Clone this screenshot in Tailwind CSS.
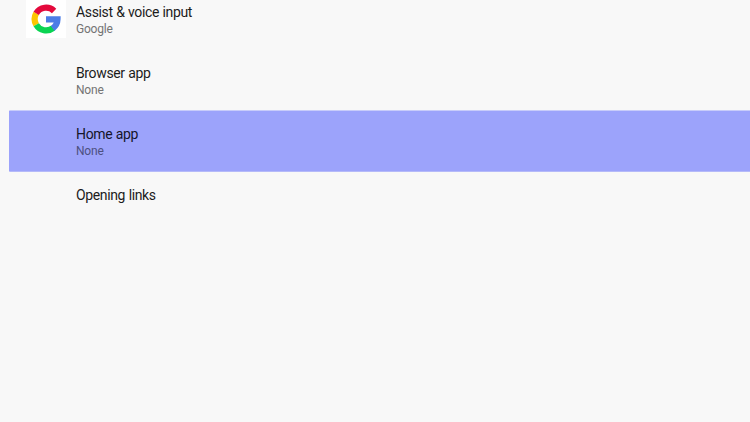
<!DOCTYPE html>
<html lang="en">
  <head>
    <meta charset="UTF-8" />
    <meta name="viewport" content="width=device-width, initial-scale=1.0" />
    <title>Default apps</title>
    <script src="https://cdn.jsdelivr.net/npm/@tailwindcss/browser@4"></script>
  </head>
  <body class="h-screen overflow-hidden bg-[#f8f8f8] font-['Roboto',sans-serif] text-[#1c1c1c]">
    <ul class="pl-[9px]">
      <li class="flex h-[50px]">
        <div class="ml-[17px] flex h-[38px] w-10 justify-center bg-white pt-1">
          <svg class="-ml-px size-[30px]" viewBox="0 0 30 30" fill="none" stroke-width="6.2">
            <path d="M5.2 20.7A11.5 11.5 0 0 1 5.2 9.3" stroke="#fdc500" />
            <path d="M5.2 9.3A11.5 11.5 0 0 1 23.1 6.9" stroke="#e4093c" />
            <path d="M22.2 24A11.5 11.5 0 0 1 5.2 20.7" stroke="#0bd452" />
            <path d="M15 15.3H26.5A11.5 11.5 0 0 1 21.7 24.4" stroke="#4c7de6" />
          </svg>
        </div>
        <div class="ml-2.5 pt-[3px]">
          <p class="text-[14px] leading-[18px] tracking-[-0.36px] [word-spacing:0.4px]">Assist &amp; voice input</p>
          <p class="text-[12px] leading-[17px] tracking-[-0.2px] text-[#747474]">Google</p>
        </div>
      </li>
      <li class="h-[60px] pt-[14px] pl-[67px]">
        <p class="text-[14px] leading-[18px] tracking-[-0.36px] [word-spacing:0.4px]">Browser app</p>
        <p class="text-[12px] leading-[17px] tracking-[-0.2px] text-[#747474]">None</p>
      </li>
      <li class="h-[62px] rounded-l-[1px] border-y border-t-[#c8ccfa] border-b-[#b5baf9] bg-[#9ca3fb] bg-clip-padding pt-[14px] pl-[67px] text-[#14152a]">
        <p class="text-[14px] leading-[18px] tracking-[-0.36px] [word-spacing:0.4px]">Home app</p>
        <p class="text-[12px] leading-[17px] tracking-[-0.2px] text-[#4d5080]">None</p>
      </li>
      <li class="pt-[14px] pl-[67px]">
        <p class="text-[14px] leading-[18px] tracking-[-0.36px] [word-spacing:0.4px]">Opening links</p>
      </li>
    </ul>
  </body>
</html>
